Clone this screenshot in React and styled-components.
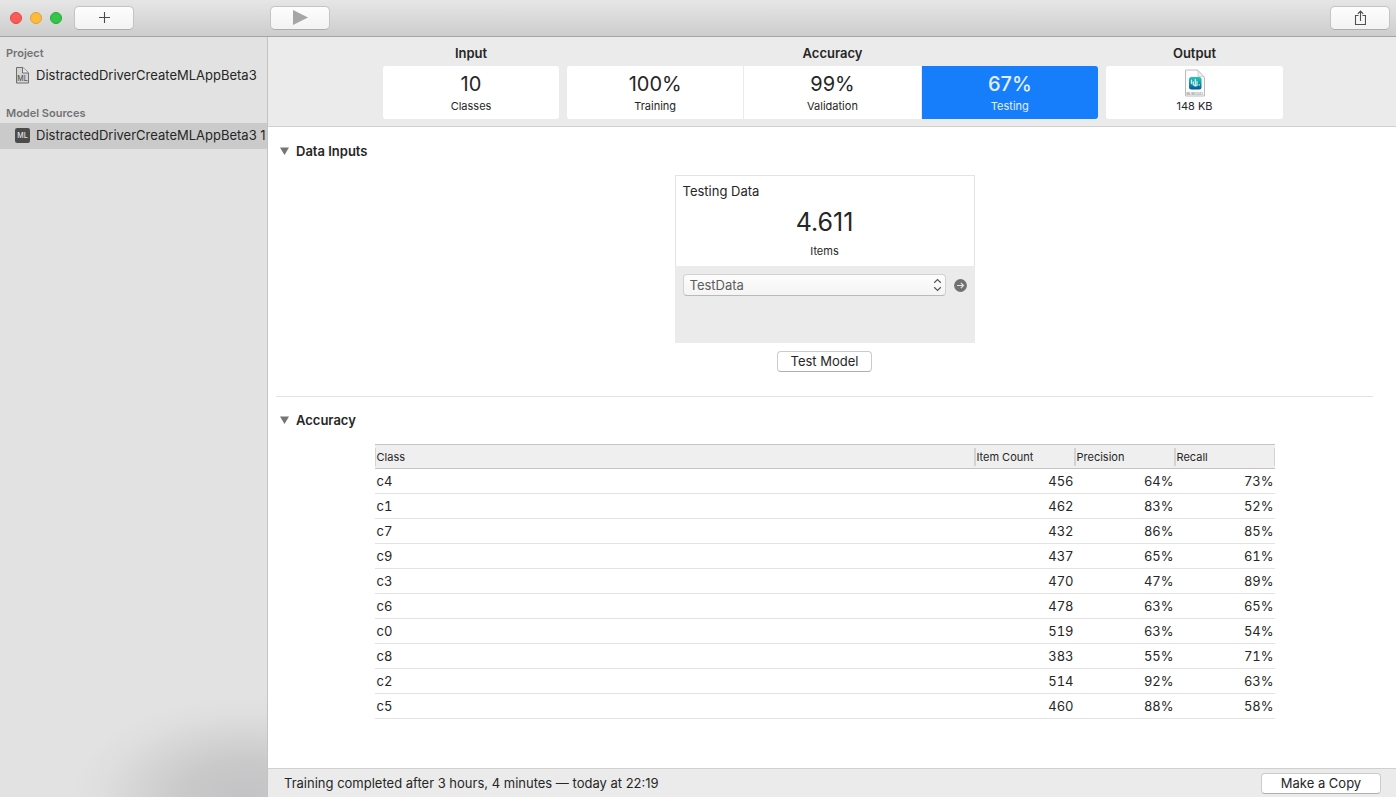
import React from "react";
import styled, { createGlobalStyle } from "styled-components";

const GlobalStyle = createGlobalStyle`
  *, *::before, *::after { box-sizing: border-box; }
  body {
    margin: 0;
    background: #fff;
    color: #262626;
    font-family: Inter, "Liberation Sans", sans-serif;
    font-size: 13px;
    line-height: 16px;
  }
  button, select { font: inherit; color: inherit; }
  h2, h3, p, ul { margin: 0; padding: 0; }
`;

const Window = styled.div`
  display: flex;
  flex-direction: column;
  min-height: 100vh;
`;

const Toolbar = styled.header`
  display: flex;
  align-items: center;
  height: 37px;
  padding: 0 6px 0 10px;
  background: linear-gradient(#e6e6e6, #cdcdcd);
  border-bottom: 1px solid #a5a5a5;
`;

const LeadingTools = styled.div`
  display: flex;
  align-items: center;
  width: 260px;
`;

const TrafficLights = styled.div`
  display: flex;
  gap: 8px;
  margin-right: 12px;
`;

const Light = styled.button`
  width: 12px;
  height: 12px;
  padding: 0;
  border: 1px solid ${(p) => p.$edge};
  border-radius: 50%;
  background: ${(p) => p.$fill};
`;

const ToolButton = styled.button`
  display: flex;
  align-items: center;
  justify-content: center;
  width: 60px;
  height: 24px;
  padding: 0;
  border: 1px solid #c4c4c4;
  border-bottom-color: #adadad;
  border-radius: 5px;
  background: linear-gradient(#fdfdfd, #f2f2f2);
  margin-left: ${(p) => (p.$end ? "auto" : "0")};
`;

const Body = styled.div`
  display: flex;
  flex: 1;
`;

const Sidebar = styled.nav`
  flex: 0 0 268px;
  padding-top: 8px;
  border-right: 1px solid #c3c3c3;
  background:
    radial-gradient(ellipse 175px 100px at 92% 100%, #c3c3c5 0%, #c9c9ca 35%, #d4d4d5 60%, #dedede 82%, rgba(226, 226, 226, 0) 100%),
    #e2e2e2;
`;

const SourceGroup = styled.section`
  margin-bottom: 16px;
`;

const GroupTitle = styled.h3`
  padding-left: 6px;
  font-size: 11px;
  font-weight: 600;
  color: #737373;
`;

const SourceList = styled.ul`
  list-style: none;
  padding-top: 2px;
`;

const SourceLink = styled.a`
  display: flex;
  align-items: center;
  gap: 6px;
  height: 26px;
  padding: 0 0 2px 14px;
  color: inherit;
  text-decoration: none;
  white-space: nowrap;
  background: ${(p) => (p.$selected ? "#cacaca" : "transparent")};
`;

const Main = styled.main`
  display: flex;
  flex-direction: column;
  flex: 1;
  min-width: 0;
`;

const StageStrip = styled.div`
  display: flex;
  justify-content: center;
  gap: 8px;
  padding: 8px 16px 7px 18px;
  background: #ebebeb;
  border-bottom: 1px solid #d0d0d0;
`;

const StageGroup = styled.section`
  flex: 0 1 ${(p) => p.$width}px;
`;

const StageTitle = styled.h2`
  margin-bottom: 5px;
  font-size: 13px;
  font-weight: 600;
  text-align: center;
`;

const StageCards = styled.div`
  display: flex;
  gap: 1px;
  height: 53px;
  border-radius: 3px;
  overflow: hidden;
`;

const StageCard = styled.button`
  display: flex;
  flex: 1;
  flex-direction: column;
  align-items: center;
  padding: 3px 0 0;
  border: 0;
  background: ${(p) => (p.$active ? "#167efb" : "#fff")};
  color: ${(p) => (p.$active ? "#e3effe" : "#262626")};
`;

const StageValue = styled.span`
  height: 29px;
  font-size: 20px;
  line-height: 30px;
  font-weight: ${(p) => (p.$active ? 500 : 400)};
`;

const Caption = styled.span`
  font-size: 11px;
  line-height: 16px;
`;

const Content = styled.div`
  flex: 1;
  padding-right: 15px;
`;

const Panel = styled.section`
  margin: 0 8px;
  padding: ${(p) => (p.$divided ? "15px" : "16px")} 0 24px;
  border-top: ${(p) => (p.$divided ? "1px solid #e3e3e3" : "0")};
`;

const PanelToggle = styled.button`
  display: flex;
  align-items: center;
  gap: 7px;
  margin-bottom: 16px;
  padding: 0 0 0 4px;
  border: 0;
  background: none;
  font-weight: 600;
`;

const DataColumn = styled.div`
  display: flex;
  flex-direction: column;
  align-items: center;
  gap: 8px;
`;

const DataCard = styled.div`
  width: 300px;
`;

const DataSummary = styled.div`
  display: flex;
  flex-direction: column;
  height: 91px;
  padding: 7px 7px 0;
  border: 1px solid #e3e3e3;
  border-bottom: 0;
  text-align: center;
`;

const DataTitle = styled.h3`
  font-size: 13px;
  font-weight: 400;
  text-align: left;
`;

const DataCount = styled.span`
  height: 44px;
  font-size: 25px;
  line-height: 46px;
`;

const DataSource = styled.div`
  display: flex;
  align-items: flex-start;
  height: 77px;
  padding: 8px;
  background: #ebebeb;
`;

const SelectWrap = styled.div`
  position: relative;
  flex: 1;
  margin-right: 8px;

  svg {
    position: absolute;
    top: 4px;
    right: 4px;
    pointer-events: none;
  }
`;

const Select = styled.select`
  display: block;
  width: 100%;
  height: 22px;
  padding: 0 20px 0 6px;
  appearance: none;
  border: 1px solid #d2d2d2;
  border-bottom-color: #b9b9b9;
  border-radius: 4px;
  background: linear-gradient(#fdfdfd, #f4f4f4);
  color: #5d5d5d;
`;

const RevealButton = styled.button`
  display: flex;
  padding: 4px 0;
  border: 0;
  background: none;
`;

const PushButton = styled.button`
  height: 21px;
  padding: 0;
  width: ${(p) => (p.$wide ? "120px" : "95px")};
  border: 1px solid #cbcbcb;
  border-bottom-color: #b0b0b0;
  border-radius: 4px;
  background: #fff;
  line-height: 19px;
`;

const Table = styled.table`
  width: 100%;
  max-width: 900px;
  margin: 0 auto;
  border-collapse: separate;
  border-spacing: 0;
  table-layout: fixed;
  font-variant-numeric: tabular-nums;
`;

const HeadCell = styled.th`
  width: ${(p) => (p.$narrow ? "100px" : "auto")};
  height: 25px;
  padding: 0;
  border-top: 1px solid #c4c4c4;
  border-bottom: 1px solid #c4c4c4;
  background: #efefef;
  font-size: 11px;
  font-weight: 400;
  text-align: left;

  span {
    display: block;
    height: 18px;
    padding-left: 1px;
    line-height: 18px;
    border-left: 1px solid #d3d3d3;
    border-right: 1px solid #d3d3d3;
  }
`;

const Cell = styled.td`
  height: 25px;
  padding: 0 1px 0 2px;
  border-bottom: 1px solid #e3e3e3;
  text-align: ${(p) => (p.$numeric ? "right" : "left")};
`;

const StatusBar = styled.footer`
  display: flex;
  align-items: center;
  justify-content: space-between;
  height: 29px;
  padding: 0 15px 0 16px;
  background: #ebebeb;
  border-top: 1px solid #d0d0d0;
`;

const PlusIcon = () => (
  <svg width="12" height="12" viewBox="0 0 12 12" aria-hidden="true">
    <path d="M6.5 0v11M1 5.5h11" stroke="#4a4a4a" strokeWidth="1.1" fill="none" />
  </svg>
);

const PlayIcon = () => (
  <svg width="16" height="16" viewBox="0 0 16 16" aria-hidden="true">
    <path d="M1 0 16 7.500 1 15z" fill="#a6a6a6" />
  </svg>
);

const ShareIcon = () => (
  <svg width="12" height="16" viewBox="0 0 12 16" aria-hidden="true">
    <path d="M4.500 5.500h-3v9h10v-9h-3M6.500 11V1.200M3.800 3.800l2.700-2.700 2.700 2.700" stroke="#505050" strokeWidth="1.100" fill="none" />
  </svg>
);

const ProjectIcon = () => (
  <svg width="16" height="18" viewBox="0 0 16 18" aria-hidden="true">
    <path d="M2.500 1.500h6.300l5.700 5.300v10.200h-12z" fill="#d4d4d4" stroke="#6e6e6e" />
    <path d="M8.500 1.500v5.500h6" fill="#e8e8e8" stroke="#6e6e6e" />
    <text x="8.500" y="14.800" fontSize="7" fontWeight="500" textAnchor="middle" fill="#555">ML</text>
  </svg>
);

const ModelIcon = () => (
  <svg width="16" height="16" viewBox="0 0 16 16" aria-hidden="true">
    <rect x="1" y="1" width="15" height="15" rx="2.200" fill="#4b4b4b" />
    <text x="8.500" y="11" fontSize="7" fontWeight="500" textAnchor="middle" fill="#e6e6e6">ML</text>
  </svg>
);

const ModelFileIcon = () => (
  <svg width="22" height="29" viewBox="0 0 22 29" aria-hidden="true">
    <defs>
      <linearGradient id="modelTile" x1="0" y1="0" x2="0" y2="1">
        <stop offset="0" stopColor="#1fc9b4" />
        <stop offset=".5" stopColor="#1296ab" />
        <stop offset="1" stopColor="#07529a" />
      </linearGradient>
    </defs>
    <path d="M1.500 1h12l7 7.400v18.600h-19z" fill="#fcfcfc" stroke="#bcbcbc" />
    <path d="M13.500 1c1 2.600.8 5 .3 6.600 2-.5 4.600-.2 6.700.8z" fill="#efefef" stroke="#c2c2c2" strokeWidth=".7" />
    <rect x="5" y="8" width="12.500" height="12.500" rx="2.500" fill="url(#modelTile)" />
    <path d="M7.500 11.200v3.300M9.300 13v2.800M11.300 10.500v6.500M13 12.500v4M9.300 15.500l2 1.500 1.700-.8M15 15.800h.5" stroke="#c8f1ee" strokeWidth="1.300" strokeLinecap="round" strokeLinejoin="round" fill="none" />
    <text x="11" y="25.500" fontSize="3.500" fontWeight="500" textAnchor="middle" fill="#8a8a8a">MLMODEL</text>
  </svg>
);

const Disclosure = () => (
  <svg width="9" height="8" viewBox="0 0 9 8" aria-hidden="true">
    <path d="M0 .5h9L4.500 8z" fill="#757575" />
  </svg>
);

const StepperIcon = () => (
  <svg width="9" height="14" viewBox="0 0 9 14" aria-hidden="true">
    <path d="M1.200 4.700 4.500 1.500l3.300 3.200M1.200 9.300l3.300 3.200 3.300-3.200" stroke="#555" strokeWidth="1.200" fill="none" />
  </svg>
);

const RevealIcon = () => (
  <svg width="13" height="14" viewBox="0 0 13 14" aria-hidden="true">
    <circle cx="6.500" cy="7.500" r="6.400" fill="#717171" />
    <path d="M3 7.500h6.500M6.800 4.900 9.500 7.500 6.800 10.100" stroke="#e4e4e4" strokeWidth="1.200" fill="none" />
  </svg>
);

const ROWS = [
  ["c4", 456, "64%", "73%"],
  ["c1", 462, "83%", "52%"],
  ["c7", 432, "86%", "85%"],
  ["c9", 437, "65%", "61%"],
  ["c3", 470, "47%", "89%"],
  ["c6", 478, "63%", "65%"],
  ["c0", 519, "63%", "54%"],
  ["c8", 383, "55%", "71%"],
  ["c2", 514, "92%", "63%"],
  ["c5", 460, "88%", "58%"],
];

function Stage({ value, caption, active }) {
  return (
    <StageCard type="button" $active={active}>
      <StageValue $active={active}>{value}</StageValue>
      <Caption>{caption}</Caption>
    </StageCard>
  );
}

export default function App() {
  return (
    <>
      <GlobalStyle />
      <Window>
        <Toolbar>
          <LeadingTools>
            <TrafficLights>
              <Light type="button" aria-label="Close" $fill="#fc5b57" $edge="#e2463f" />
              <Light type="button" aria-label="Minimize" $fill="#fdbb3e" $edge="#e0a032" />
              <Light type="button" aria-label="Zoom" $fill="#34c648" $edge="#27a934" />
            </TrafficLights>
            <ToolButton type="button" aria-label="Add"><PlusIcon /></ToolButton>
          </LeadingTools>
          <ToolButton type="button" aria-label="Train"><PlayIcon /></ToolButton>
          <ToolButton type="button" aria-label="Share" $end><ShareIcon /></ToolButton>
        </Toolbar>
        <Body>
          <Sidebar>
            <SourceGroup>
              <GroupTitle>Project</GroupTitle>
              <SourceList>
                <li><SourceLink href="#project"><ProjectIcon />DistractedDriverCreateMLAppBeta3</SourceLink></li>
              </SourceList>
            </SourceGroup>
            <SourceGroup>
              <GroupTitle>Model Sources</GroupTitle>
              <SourceList>
                <li><SourceLink href="#model" $selected><ModelIcon />DistractedDriverCreateMLAppBeta3 1</SourceLink></li>
              </SourceList>
            </SourceGroup>
          </Sidebar>
          <Main>
            <StageStrip>
              <StageGroup $width={176}>
                <StageTitle>Input</StageTitle>
                <StageCards><Stage value="10" caption="Classes" /></StageCards>
              </StageGroup>
              <StageGroup $width={531}>
                <StageTitle>Accuracy</StageTitle>
                <StageCards>
                  <Stage value="100%" caption="Training" />
                  <Stage value="99%" caption="Validation" />
                  <Stage value="67%" caption="Testing" active />
                </StageCards>
              </StageGroup>
              <StageGroup $width={177}>
                <StageTitle>Output</StageTitle>
                <StageCards>
                  <StageCard type="button">
                    <ModelFileIcon />
                    <Caption>148 KB</Caption>
                  </StageCard>
                </StageCards>
              </StageGroup>
            </StageStrip>
            <Content>
              <Panel>
                <PanelToggle type="button" aria-expanded="true"><Disclosure />Data Inputs</PanelToggle>
                <DataColumn>
                  <DataCard>
                    <DataSummary>
                      <DataTitle id="testing-data">Testing Data</DataTitle>
                      <DataCount>4.611</DataCount>
                      <Caption>Items</Caption>
                    </DataSummary>
                    <DataSource>
                      <SelectWrap>
                        <Select aria-labelledby="testing-data" defaultValue="TestData">
                          <option>TestData</option>
                        </Select>
                        <StepperIcon />
                      </SelectWrap>
                      <RevealButton type="button" aria-label="Show in Finder"><RevealIcon /></RevealButton>
                    </DataSource>
                  </DataCard>
                  <PushButton type="button">Test Model</PushButton>
                </DataColumn>
              </Panel>
              <Panel $divided>
                <PanelToggle type="button" aria-expanded="true"><Disclosure />Accuracy</PanelToggle>
                <Table>
                  <thead>
                    <tr>
                      <HeadCell scope="col"><span>Class</span></HeadCell>
                      <HeadCell scope="col" $narrow><span>Item Count</span></HeadCell>
                      <HeadCell scope="col" $narrow><span>Precision</span></HeadCell>
                      <HeadCell scope="col" $narrow><span>Recall</span></HeadCell>
                    </tr>
                  </thead>
                  <tbody>
                    {ROWS.map(([name, count, precision, recall]) => (
                      <tr key={name}>
                        <Cell>{name}</Cell>
                        <Cell $numeric>{count}</Cell>
                        <Cell $numeric>{precision}</Cell>
                        <Cell $numeric>{recall}</Cell>
                      </tr>
                    ))}
                  </tbody>
                </Table>
              </Panel>
            </Content>
            <StatusBar>
              <p>Training completed after 3 hours, 4 minutes — today at 22:19</p>
              <PushButton type="button" $wide>Make a Copy</PushButton>
            </StatusBar>
          </Main>
        </Body>
      </Window>
    </>
  );
}
